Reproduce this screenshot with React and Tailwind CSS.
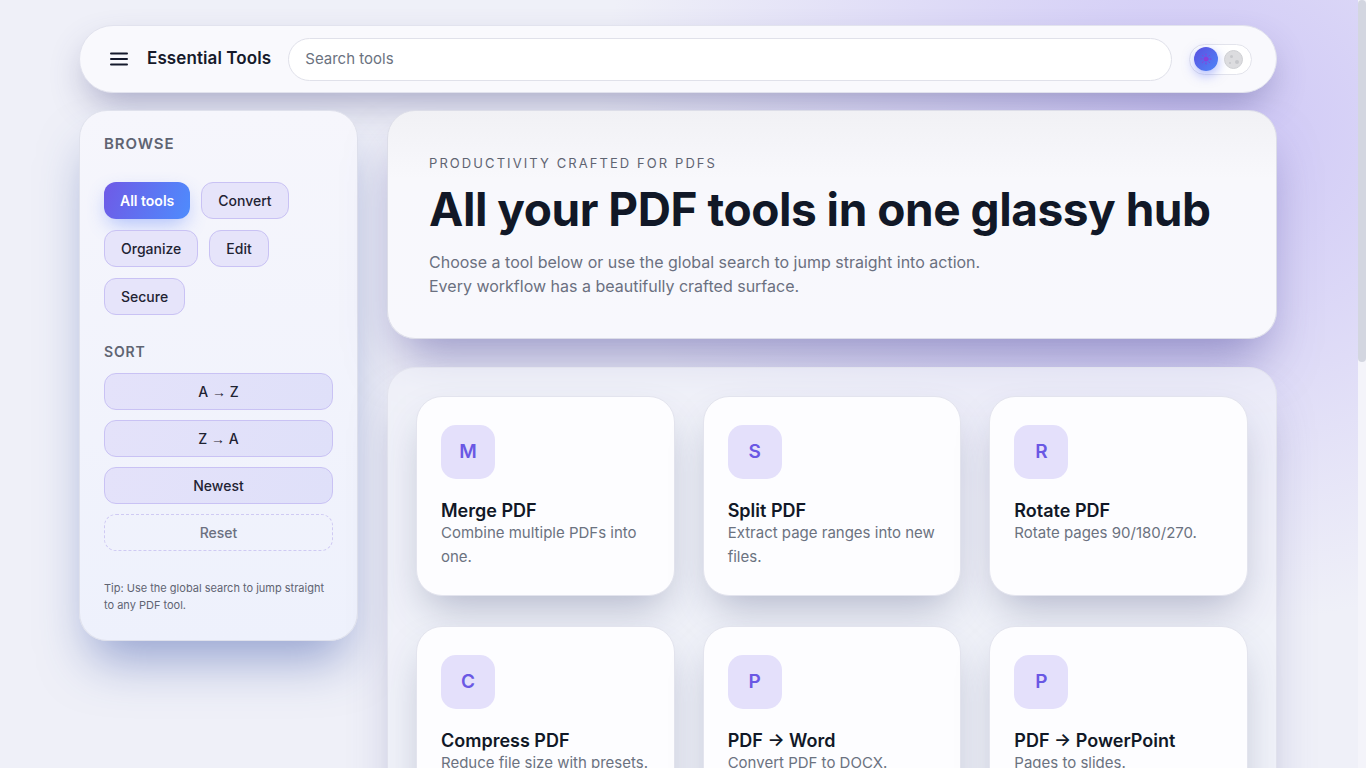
import React from "react";

const tools = [
  ["M", "Merge PDF", "Combine multiple PDFs into one."],
  ["S", "Split PDF", "Extract page ranges into new files."],
  ["R", "Rotate PDF", "Rotate pages 90/180/270."],
  ["C", "Compress PDF", "Reduce file size with presets."],
  ["P", "PDF → Word", "Convert PDF to DOCX."],
  ["P", "PDF → PowerPoint", "Pages to slides."],
  ["P", "PDF → Excel", "Pull tables into spreadsheets."],
  ["W", "Word → PDF", "Turn DOCX files into PDFs."],
  ["J", "JPG → PDF", "Bundle images into one PDF."],
  ["E", "Edit PDF", "Add text, shapes and notes."],
  ["W", "Watermark", "Stamp text or images on pages."],
  ["P", "Protect PDF", "Encrypt with a password."],
  ["U", "Unlock PDF", "Remove password protection."],
  ["S", "Sign PDF", "Draw or type your signature."],
  ["O", "Organize PDF", "Reorder and delete pages."],
];

function Chip({ children, active }) {
  if (active) {
    return (
      <button className="h-[37px] px-[16px] rounded-[12px] text-[14px] font-semibold text-white bg-[linear-gradient(110deg,#6f5ae6,#4e8cfd)] shadow-[0_8px_20px_-4px_rgba(79,120,250,0.45)]">
        {children}
      </button>
    );
  }
  return (
    <button className="h-[37px] px-[16px] rounded-[12px] text-[14px] font-medium text-[#1f2333] bg-[#e6e4fa] border border-[#c9c2f4]">
      {children}
    </button>
  );
}

function Arrow() {
  return <span className="font-['Liberation_Sans',sans-serif] font-normal">→</span>;
}

function SortBtn({ children }) {
  return (
    <button className="h-[37px] w-full rounded-[12px] text-[14px] font-medium text-[#1f2333] bg-[linear-gradient(110deg,#e4e2fa,#dfe0f9)] border border-[#c9c2f4]">
      {children}
    </button>
  );
}

function Card({ letter, title, desc }) {
  return (
    <div className="h-[200px] rounded-[26px] bg-[#fdfdff] border border-[#e3e4ee] px-[24px] pt-[28px] shadow-[0_20px_40px_-10px_rgba(60,66,110,0.34)]">
      <div className="w-[54px] h-[54px] rounded-[15px] bg-[#e4e0fb] flex items-center justify-center text-[19px] font-semibold text-[#6a58e4]">
        {letter}
      </div>
      <div className="mt-[21px] text-[18px] font-semibold text-[#111827] leading-[22px]">{title}</div>
      <div className="mt-[-1px] text-[15px] text-[#6b7280] leading-[24px]">{desc}</div>
    </div>
  );
}

export default function App() {
  return (
    <div className="h-screen flex font-['Inter',sans-serif] bg-[#eff0f8]">
      <div className="flex-1 h-full overflow-y-auto [scrollbar-width:none]">
        <div className="min-h-full bg-[radial-gradient(ellipse_600px_500px_at_88%_8%,rgba(188,176,245,0.65),transparent),radial-gradient(ellipse_500px_500px_at_12%_95%,rgba(165,192,250,0.7),transparent)] pb-[40px]">
          <div className="w-[1198px] ml-[79px] pt-[25px]">
            {/* Header */}
            <header className="h-[68px] rounded-[34px] bg-[#f9f9fd] border border-[#e2e3ee] shadow-[0_16px_36px_-8px_rgba(70,70,130,0.45)] flex items-center pl-[29px] pr-[24px]">
              <svg width="20" height="16" viewBox="0 0 20 16" className="shrink-0">
                <rect x="1" y="1.5" width="18" height="2" rx="1" fill="#151a2d" />
                <rect x="1" y="7" width="18" height="2" rx="1" fill="#151a2d" />
                <rect x="1" y="12.5" width="18" height="2" rx="1" fill="#151a2d" />
              </svg>
              <div className="ml-[18px] text-[17px] font-semibold text-[#161a2b] tracking-[0.1px]">Essential Tools</div>
              <div className="ml-[17px] flex-1 h-[43px] rounded-full bg-white border border-[#e0e1ea] flex items-center px-[16px] text-[15px] text-[#6b7280]">
                Search tools
              </div>
              <div className="ml-[17px] w-[63px] h-[31px] rounded-full bg-white border border-[#e3e4ec] flex items-center px-[4px] gap-[6px]">
                <div className="w-[24px] h-[24px] rounded-full bg-[linear-gradient(135deg,#5b4fe0,#4d86f8)] shadow-[0_4px_12px_rgba(90,110,250,0.5)] flex items-center justify-center">
                  <svg width="12" height="12" viewBox="0 0 24 24" fill="none" stroke="#8b3fd9" strokeWidth="2" strokeLinecap="round">
                    <circle cx="12" cy="12" r="4" fill="#8b3fd9" />
                    <path d="M12 2v2M12 20v2M2 12h2M20 12h2M4.9 4.9l1.4 1.4M17.7 17.7l1.4 1.4M4.9 19.1l1.4-1.4M17.7 6.3l1.4-1.4" />
                  </svg>
                </div>
                <div className="w-[19px] h-[19px] rounded-full bg-[#dcdcdf] border border-[#cfd0d4] relative">
                  <span className="absolute left-[5px] top-[4px] w-[3px] h-[3px] rounded-full bg-[#c6c7cb]" />
                  <span className="absolute left-[10px] top-[9px] w-[4px] h-[4px] rounded-full bg-[#c6c7cb]" />
                  <span className="absolute left-[4px] top-[11px] w-[2px] h-[2px] rounded-full bg-[#c6c7cb]" />
                </div>
              </div>
            </header>

            <div className="mt-[17px] flex gap-[29px] items-start">
              {/* Sidebar */}
              <aside className="w-[279px] shrink-0 rounded-[28px] bg-[linear-gradient(180deg,#f6f6fc,#eef1fc)] border border-[#dfe1ec] shadow-[0_30px_50px_-12px_rgba(60,85,170,0.5)] px-[24px] pt-[23px] pb-[26px]">
                <div className="text-[15px] font-semibold tracking-[0.06em] text-[#5f6472] leading-[20px]">BROWSE</div>
                <div className="mt-[28px] flex flex-wrap gap-[11px] w-[200px]">
                  <Chip active>All tools</Chip>
                  <Chip>Convert</Chip>
                  <Chip>Organize</Chip>
                  <Chip>Edit</Chip>
                  <Chip>Secure</Chip>
                </div>
                <div className="mt-[28px] text-[14px] font-semibold tracking-[0.06em] text-[#5f6472] leading-[18px]">SORT</div>
                <div className="mt-[12px] flex flex-col gap-[10px]">
                  <SortBtn>A <Arrow /> Z</SortBtn>
                  <SortBtn>Z <Arrow /> A</SortBtn>
                  <SortBtn>Newest</SortBtn>
                  <button className="h-[37px] w-full rounded-[12px] text-[14px] font-medium text-[#6b7080] border border-dashed border-[#cfcaf3]">
                    Reset
                  </button>
                </div>
                <p className="mt-[29px] text-[11px] leading-[17px] text-[#5f6472]">
                  Tip: Use the global search to jump straight to any PDF tool.
                </p>
              </aside>

              {/* Main */}
              <main className="flex-1 flex flex-col gap-[28px]">
                <section className="h-[229px] rounded-[28px] bg-[linear-gradient(180deg,#f1f1f5,#f8f8fc_30%,#f8f8fd)] border border-[#dcdde8] shadow-[0_30px_50px_-12px_rgba(85,80,160,0.55)] px-[41px] pt-[44px]">
                  <div className="text-[13px] tracking-[0.16em] text-[#5f6472] leading-[16px]">PRODUCTIVITY CRAFTED FOR PDFS</div>
                  <h1 className="mt-[10px] text-[46px] font-bold text-[#111827] leading-[56px] tracking-[-0.01em]">
                    All your PDF tools in one glassy hub
                  </h1>
                  <p className="mt-[13px] text-[16px] leading-[24px] text-[#6b7080]">
                    Choose a tool below or use the global search to jump straight into action.
                    <br />
                    Every workflow has a beautifully crafted surface.
                  </p>
                </section>

                <section className="rounded-[28px] bg-[#f1f2f9]/70 border border-[#e2e3ee] shadow-[0_26px_50px_-14px_rgba(80,80,150,0.38)] p-[28px] grid grid-cols-3 gap-x-[28px] gap-y-[30px]">
                  {tools.map(([l, t, d], i) => (
                    <Card key={i} letter={l} title={t} desc={d} />
                  ))}
                </section>
              </main>
            </div>
          </div>
        </div>
      </div>
      <div className="w-[8px] h-full bg-[#f4f4fa] shrink-0">
        <div className="w-[8px] h-[362px] rounded-full bg-[#d3d6e0]" />
      </div>
    </div>
  );
}
